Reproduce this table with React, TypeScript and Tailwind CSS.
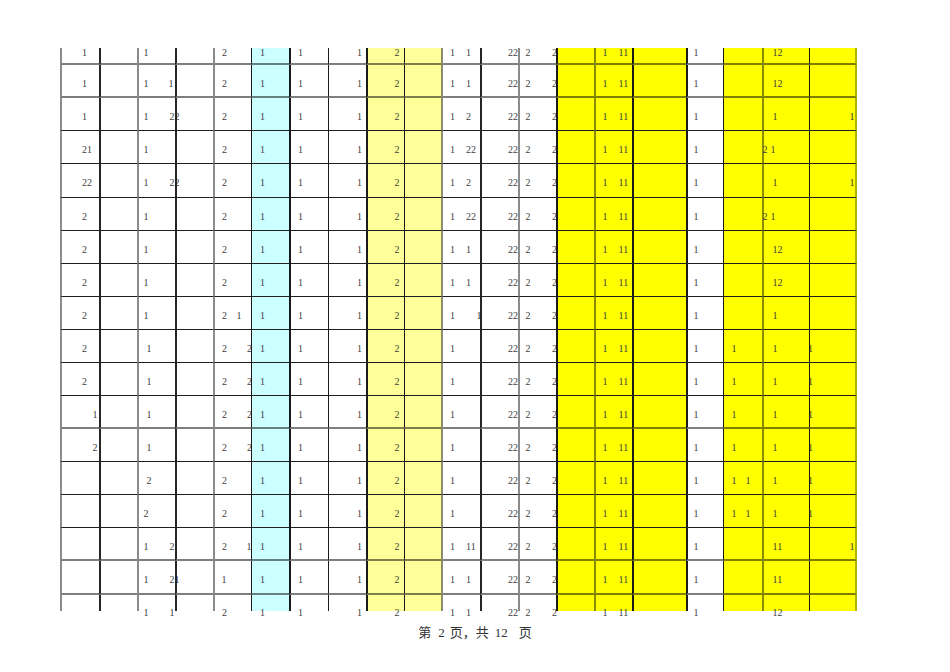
type Item = [number, string];

// left edge of every sheet column, px from the page edge
const LEFTS = [60, 99, 137, 175, 213, 251, 289, 328, 366, 404, 442, 480, 518, 556, 594, 632, 686, 723, 762, 809];

const GRID =
  'grid grid-rows-1 grid-cols-[39px_38px_38px_38px_38px_38px_39px_38px_38px_38px_38px_38px_38px_38px_38px_54px_37px_39px_47px_48px]';

const COLS: { bw: number; cls: string }[] = [
  { bw: 2, cls: 'border-l-2 border-l-black/45' },
  { bw: 2, cls: 'border-l-2 border-l-[#262626]' },
  { bw: 2, cls: 'border-l-2 border-l-black/45' },
  { bw: 2, cls: 'border-l-2 border-l-[#262626]' },
  { bw: 2, cls: 'border-l-2 border-l-black/45' },
  { bw: 1, cls: 'border-l border-l-[#1a1a1a] bg-[#ccffff]' },
  { bw: 2, cls: 'border-l-2 border-l-[#1a1a1a]' },
  { bw: 1, cls: 'border-l border-l-[#1a1a1a]' },
  { bw: 2, cls: 'border-l-2 border-l-[#1a1a1a] bg-[#ffff99]' },
  { bw: 1, cls: 'border-l border-l-[#1a1a1a] border-r border-r-black/45 bg-[#ffff99]' },
  { bw: 1, cls: 'border-l border-l-black/45' },
  { bw: 2, cls: 'border-l-2 border-l-[#262626]' },
  { bw: 2, cls: 'border-l-2 border-l-black/45' },
  { bw: 2, cls: 'border-l-2 border-l-[#1a1a1a] bg-[#ffff00]' },
  { bw: 2, cls: 'border-l-2 border-l-black/45 bg-[#ffff00]' },
  { bw: 2, cls: 'border-l-2 border-l-[#1a1a1a] bg-[#ffff00]' },
  { bw: 2, cls: 'border-l-2 border-l-[#1a1a1a]' },
  { bw: 1, cls: 'border-l border-l-[#1a1a1a] bg-[#ffff00]' },
  { bw: 2, cls: 'border-l-2 border-l-black/45 bg-[#ffff00]' },
  { bw: 1, cls: 'border-l border-l-[#1a1a1a] border-r-2 border-r-black/30 bg-[#ffff00]' },
];

const HALF = 'border-b-2 border-b-black/50';
const DARK = 'border-b border-b-[#1f1f1f]';

// cells that hold the same value on every row
const COMMON: Item[] = [
  [260, '1'], [298, '1'], [357, '1'], [394.5, '2'], [450, '1'],
  [508, '22'], [525.5, '2'], [552, '2'], [602.5, '1'], [618.5, '11'], [693.5, '1'],
];

const mid: Item[] = [[222, '2'], [247, '2'], [731.5, '1'], [772.5, '1'], [808, '1']];

const ROWS: { h: string; line: string; kind: 'top' | 'full' | 'bottom'; items: Item[] }[] = [
  { h: 'h-[17px]', line: HALF, kind: 'top', items: [[82, '1'], [143.5, '1'], [222, '2'], [466, '1'], [772.5, '12']] },
  { h: 'h-[33px]', line: HALF, kind: 'full', items: [[82, '1'], [143.5, '1'], [168.5, '1'], [222, '2'], [466, '1'], [772.5, '12']] },
  { h: 'h-[33px]', line: DARK, kind: 'full', items: [[82, '1'], [143.5, '1'], [169.5, '22'], [222, '2'], [466, '2'], [772.5, '1'], [849.5, '1']] },
  { h: 'h-[33px]', line: DARK, kind: 'full', items: [[82, '21'], [143.5, '1'], [222, '2'], [466, '22'], [762.5, '2'], [770.5, '1']] },
  { h: 'h-[34px]', line: DARK, kind: 'full', items: [[82, '22'], [143.5, '1'], [169.5, '22'], [222, '2'], [466, '2'], [772.5, '1'], [849.5, '1']] },
  { h: 'h-[33px]', line: DARK, kind: 'full', items: [[82, '2'], [143.5, '1'], [222, '2'], [466, '22'], [762.5, '2'], [770.5, '1']] },
  { h: 'h-[33px]', line: DARK, kind: 'full', items: [[82, '2'], [143.5, '1'], [222, '2'], [466, '1'], [772.5, '12']] },
  { h: 'h-[33px]', line: DARK, kind: 'full', items: [[82, '2'], [143.5, '1'], [222, '2'], [466, '1'], [772.5, '12']] },
  { h: 'h-[33px]', line: DARK, kind: 'full', items: [[82, '2'], [143.5, '1'], [222, '2'], [236.5, '1'], [476.5, '1'], [772.5, '1']] },
  { h: 'h-[33px]', line: DARK, kind: 'full', items: [[82, '2'], [146.5, '1'], ...mid] },
  { h: 'h-[33px]', line: DARK, kind: 'full', items: [[82, '2'], [146.5, '1'], ...mid] },
  { h: 'h-[33px]', line: HALF, kind: 'full', items: [[92.5, '1'], [146.5, '1'], ...mid] },
  { h: 'h-[33px]', line: DARK, kind: 'full', items: [[92.5, '2'], [146.5, '1'], ...mid] },
  { h: 'h-[33px]', line: DARK, kind: 'full', items: [[146.5, '2'], [222, '2'], [731.5, '1'], [745.5, '1'], [772.5, '1'], [808, '1']] },
  { h: 'h-[33px]', line: DARK, kind: 'full', items: [[143.5, '2'], [222, '2'], [731.5, '1'], [745.5, '1'], [772.5, '1'], [808, '1']] },
  { h: 'h-[33px]', line: HALF, kind: 'full', items: [[143.5, '1'], [169.5, '2'], [222, '2'], [246.5, '1'], [466, '11'], [772.5, '11'], [849.5, '1']] },
  { h: 'h-[34px]', line: HALF, kind: 'full', items: [[143.5, '1'], [169.5, '21'], [221.5, '1'], [466, '1'], [772.5, '11']] },
  { h: 'h-[16px]', line: '', kind: 'bottom', items: [[143.5, '1'], [169.5, '1'], [222, '2'], [466, '1'], [772.5, '12']] },
];

const PAD = { top: 'pt-0', full: 'pt-[14px]', bottom: 'pt-[13px]' };

function colOf(x: number) {
  let c = 0;
  LEFTS.forEach((l, i) => {
    if (l <= x + 2) c = i;
  });
  return c;
}

function SheetRow({ row }: { row: (typeof ROWS)[number] }) {
  const all = [...COMMON, ...row.items].sort((a, b) => a[0] - b[0]);
  return (
    <div className={`${GRID} ${row.h} ${row.kind === 'top' ? 'overflow-hidden' : ''}`}>
      {COLS.map((col, ci) => {
        const own = all.filter(([x]) => colOf(x) === ci);
        let prev = LEFTS[ci] + col.bw;
        return (
          <div key={ci} className={`min-h-0 ${col.cls} ${row.line}`}>
            <div className={`${PAD[row.kind]} whitespace-nowrap text-[10px] leading-[10px]`}>
              {own.map(([x, t], k) => {
                const dx = x - prev;
                prev = x;
                return (
                  <span key={k} className="inline-block w-0" style={{ marginLeft: dx }}>
                    {t}
                  </span>
                );
              })}
            </div>
          </div>
        );
      })}
    </div>
  );
}

export default function App() {
  return (
    <div className="min-h-[672px] w-[950px] bg-white pt-[48px] font-['Liberation_Serif',serif] text-[#404040]">
      <div className="ml-[60px] flex w-max flex-col">
        {ROWS.map((r, i) => (
          <SheetRow key={i} row={r} />
        ))}
      </div>
      <div className="mt-[15px] flex justify-center font-['Liberation_Serif','Noto_Sans_CJK_SC',serif] text-[13px] leading-[13px] text-[#333]">
        <span>第</span>
        <span className="ml-[7px]">2</span>
        <span className="ml-[5px]">页，共</span>
        <span className="ml-[6px]">12</span>
        <span className="ml-[11px]">页</span>
      </div>
    </div>
  );
}
